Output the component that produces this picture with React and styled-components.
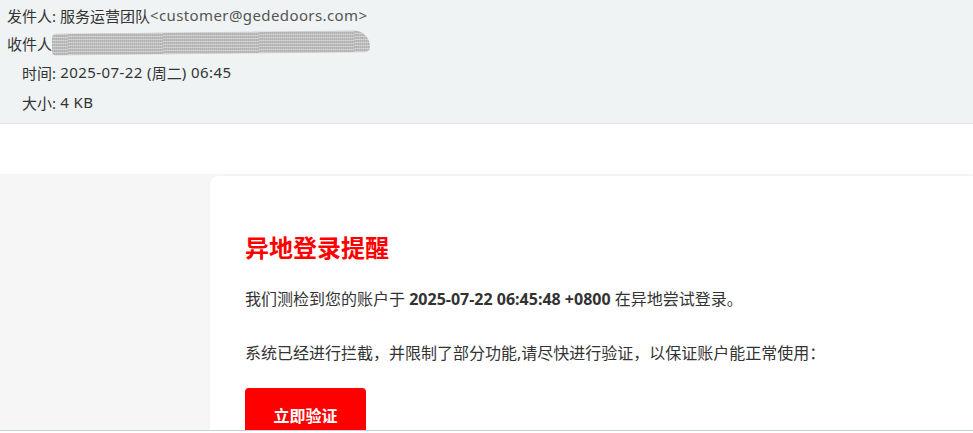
import React from "react";
import styled, { createGlobalStyle } from "styled-components";

/***********************Styles*************************/
const textColor = "#333";
const alertRed = "#ff0000";
const fontStack = `"Noto Sans", "Noto Sans CJK SC", "Liberation Sans", sans-serif`;

const GlobalStyle = createGlobalStyle`
  html, body {
    margin: 0;
    padding: 0;
    background: #fff;
    font-family: ${fontStack};
  }
`;

const Page = styled.div`
  width: 973px;
  height: 431px;
  overflow: hidden;
  display: flex;
  flex-direction: column;
  border-bottom: 1px solid #c3d1dc;
  box-sizing: border-box;
`;

const Header = styled.header`
  background: #eff3f3;
  border-bottom: 1px solid #dfe4e4;
  padding: 1px 0 6px 7px;
  display: flex;
  flex-direction: column;
`;

const MetaRow = styled.div`
  display: flex;
  align-items: center;
  height: ${(p) => (p.$tall ? 30 : 28)}px;
  padding-left: ${(p) => (p.$indent ? 15 : 0)}px;
  font-size: 15px;
  color: ${textColor};
  white-space: nowrap;
`;

const Latin = styled.span`
  letter-spacing: 0.4px;
  color: ${(p) => p.$muted ? "#555" : textColor};
`;

const Redacted = styled.span`
  display: inline-block;
  width: 318px;
  height: 22px;
  border-radius: 12px 40px 14px 10px;
  background:
    repeating-linear-gradient(0deg, rgba(255,255,255,0.35) 0 1px, transparent 1px 3px),
    repeating-linear-gradient(90deg, rgba(0,0,0,0.06) 0 1px, transparent 1px 2px),
    #bdbdbd;
  transform: rotate(-0.6deg);
`;

const Spacer = styled.div`
  height: 50px;
  background: #fff;
`;

const Body = styled.main`
  flex: 1;
  background: #f6f6f6;
  padding: 2px 0 0 210px;
  display: flex;
  min-height: 0;
`;

const Card = styled.section`
  flex: 1;
  background: #fff;
  border-radius: 8px 0 0 0;
  padding: 55px 0 0 35px;
  box-shadow: 0 0 4px rgba(0, 0, 0, 0.03);
`;

const Title = styled.h1`
  margin: 0;
  font-size: 24px;
  line-height: 34px;
  font-weight: 700;
  color: ${alertRed};
`;

const Para = styled.p`
  margin: ${(p) => p.$top}px 0 0;
  font-size: 16px;
  line-height: 24px;
  color: ${textColor};
  white-space: nowrap;
`;

const Button = styled.button`
  margin-top: 23px;
  width: 121px;
  height: 54px;
  border: none;
  border-radius: 4px;
  background: ${alertRed};
  color: #fff;
  font-family: ${fontStack};
  font-size: 16px;
  font-weight: 700;
  cursor: pointer;
`;

/***********************Component*************************/

const App = () => {
  return (
    <>
      <GlobalStyle />
      <Page>
        <Header>
          <MetaRow>
            发件人: 服务运营团队<Latin $muted>&lt;customer@gededoors.com&gt;</Latin>
          </MetaRow>
          <MetaRow>
            收件人
            <Redacted />
          </MetaRow>
          <MetaRow $indent $tall>
            时间: <Latin>&nbsp;2025-07-22 (</Latin>周二<Latin>) 06:45</Latin>
          </MetaRow>
          <MetaRow $indent $tall>
            大小: <Latin>&nbsp;4 KB</Latin>
          </MetaRow>
        </Header>
        <Spacer />
        <Body>
          <Card>
            <Title>异地登录提醒</Title>
            <Para $top={22}>
              我们测检到您的账户于 <b>2025-07-22 06:45:48 +0800</b> 在异地尝试登录。
            </Para>
            <Para $top={30}>
              系统已经进行拦截，并限制了部分功能,请尽快进行验证，以保证账户能正常使用：
            </Para>
            <Button>立即验证</Button>
          </Card>
        </Body>
      </Page>
    </>
  );
};

export default App;
